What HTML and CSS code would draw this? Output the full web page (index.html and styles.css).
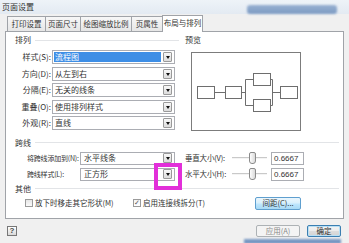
FILE: index.html
```html
<!DOCTYPE html>
<html lang="zh">
<head>
<meta charset="utf-8">
<title>页面设置</title>
<link rel="stylesheet" href="styles.css">
</head>
<body>
<div class="dialog">
  <div class="titlebar">
    <span class="title">页面设置</span>
    <div class="glow"></div>
  </div>
  <div class="tabs">
    <div class="tab w1">打印设置</div>
    <div class="tab w2">页面尺寸</div>
    <div class="tab w3">绘图缩放比例</div>
    <div class="tab w4">页属性</div>
    <div class="tab w5 active">布局与排列</div>
  </div>
  <div class="panel">
    <div class="top">
      <div class="arr">
        <div class="gtitle"><span>排列</span><i class="rule"></i></div>
        <div class="rows">
          <div class="row"><label class="lbl">样式(S):</label><div class="combo"><span class="val sel">流程图</span><span class="drop"></span></div></div>
          <div class="row"><label class="lbl">方向(D):</label><div class="combo"><span class="val">从左到右</span><span class="drop"></span></div></div>
          <div class="row"><label class="lbl">分隔(E):</label><div class="combo"><span class="val">无关的线条</span><span class="drop"></span></div></div>
          <div class="row"><label class="lbl">重叠(O):</label><div class="combo"><span class="val">使用排列样式</span><span class="drop"></span></div></div>
          <div class="row"><label class="lbl">外观(R):</label><div class="combo"><span class="val">直线</span><span class="drop"></span></div></div>
        </div>
      </div>
      <div class="pv">
        <div class="gtitle"><span>预览</span></div>
        <div class="pvbox">
          <svg width="108" height="77" viewBox="0 0 108 77">
            <g fill="#fff" stroke="#6e6e6e" stroke-width="1">
              <path d="M23 39.5H33M50 39.5H53.5M53.5 26.5V52.5M53.5 26.5H61M53.5 52.5H61M78 26.5H80.5M78 52.5H80.5M80.5 26.5V52.5M80.5 39.5H88" fill="none"/>
              <rect x="5.5" y="33.5" width="17" height="12"/>
              <rect x="33.5" y="33.5" width="16" height="12"/>
              <rect x="61.5" y="20.5" width="17" height="12"/>
              <rect x="61.5" y="46.5" width="17" height="12"/>
              <rect x="88.5" y="33.5" width="17" height="12"/>
            </g>
          </svg>
        </div>
      </div>
    </div>
    <div class="kx">
      <div class="gtitle"><span>跨线</span><i class="rule"></i></div>
      <div class="kxrow">
        <div class="kxleft"><label class="lbl2">将跨线添加到(N):</label><div class="combo c2"><span class="val">水平线条</span><span class="drop"></span></div></div>
        <div class="kxright"><label class="lbl3">垂直大小(V):</label><div class="slider"><i class="track"></i><i class="thumb"></i></div><div class="num">0.6667</div></div>
      </div>
      <div class="kxrow">
        <div class="kxleft"><label class="lbl2">跨线样式(L):</label><div class="combo c2"><span class="val">正方形</span><span class="drop"></span></div></div>
        <div class="kxright"><label class="lbl3">水平大小(H):</label><div class="slider"><i class="track"></i><i class="thumb"></i></div><div class="num">0.6667</div></div>
      </div>
    </div>
    <div class="other">
      <div class="gtitle short"><span>其他</span><i class="rule"></i></div>
      <div class="orow">
        <span class="chk"></span><span class="ctext t1">放下时移走其它形状(M)</span>
        <span class="chk on">✓</span><span class="ctext">启用连接线拆分(T)</span>
        <button class="btn spacing">间距(C)...</button>
      </div>
    </div>
  </div>
  <div class="footer">
    <div class="help"><span>?</span></div>
    <button class="btn apply">应用(A)</button>
    <button class="btn ok">确定</button>
  </div>
  <div class="bottomglow"></div>
  <div class="mark"></div>
</div>
</body>
</html>
```
FILE: styles.css
```css
* { box-sizing: border-box; }
html, body { margin: 0; padding: 0; }
body {
  width: 349px;
  height: 243px;
  overflow: hidden;
  background: #f0f0f0;
  font-family: "Noto Sans CJK SC", "Noto Sans", sans-serif;
  font-size: 8px;
  color: #333;
}
.dialog { position: relative; width: 349px; height: 243px; background: #f0f0f0; }
.titlebar {
  height: 14px;
  display: flex;
  align-items: center;
  padding-left: 2px;
  background: linear-gradient(#eef3f8, #e3eaf2);
}
.title { font-size: 8px; color: #333; line-height: 10px; }
.glow {
  margin-left: auto;
  margin-right: 12px;
  align-self: flex-end;
  width: 90px;
  height: 9px;
  background: linear-gradient(#7d9cc6, #5a80b3);
  border-radius: 3px;
  filter: blur(1.2px);
  opacity: 0.75;
}
.tabs {
  height: 17px;
  display: flex;
  align-items: flex-end;
  padding-left: 7px;
  position: relative;
  z-index: 2;
}
.tab {
  height: 15px;
  border: 1px solid #a0a3a8;
  border-bottom: none;
  margin-right: -1px;
  background: linear-gradient(#f7f7f7, #e6e6e6);
  display: flex;
  align-items: center;
  justify-content: center;
  font-size: 7.5px;
  color: #333;
  line-height: 10px;
  white-space: nowrap;
}
.w1 { width: 39px; }
.w2 { width: 36px; }
.w3 { width: 52px; }
.w4 { width: 32px; }
.w5 { width: 41px; }
.tab.active {
  height: 17px;
  margin-bottom: -1px;
  background: #fff;
  padding-bottom: 2px;
}
.panel {
  margin: 0 5px;
  height: 188px;
  border: 1px solid #a0a3a8;
  background: #fff;
  position: relative;
  z-index: 1;
}
.gtitle {
  height: 16px;
  display: flex;
  align-items: center;
  color: #333;
  line-height: 10px;
}
.gtitle .rule {
  flex: 1;
  height: 1px;
  background: #e2e4e7;
  margin-left: 4px;
}
.top { display: flex; height: 101px; }
.arr { width: 173px; padding-left: 9px; }
.rows { margin-top: 1px; }
.row { height: 16.5px; display: flex; align-items: center; }
.lbl { width: 37px; text-align: right; padding-right: 1px; line-height: 10px; white-space: nowrap; }
.combo {
  width: 123px;
  height: 14px;
  border: 1px solid #abadb3;
  background: #fff;
  display: flex;
  align-items: center;
  padding: 1px;
}
.val { flex: 1; height: 10px; line-height: 10px; padding-left: 1px; white-space: nowrap; }
.val.sel { background: #3d8ee6; color: #fff; margin-right: 2px; }
.drop {
  width: 9px;
  height: 10px;
  border: 1px solid #9a9a9a;
  border-radius: 1px;
  background: linear-gradient(#f8f8f8, #dcdcdc);
  margin-right: 1px;
  position: relative;
}
.drop::after {
  content: "";
  position: absolute;
  left: 1.5px;
  top: 3px;
  border-left: 2.5px solid transparent;
  border-right: 2.5px solid transparent;
  border-top: 3px solid #111;
}
.pv { padding-left: 6px; }
.pvbox {
  margin-left: 6px;
  margin-top: 4px;
  width: 110px;
  height: 79px;
  border: 1px solid #7c7c7c;
  background: #fff;
}
.pvbox svg { display: block; }
.kx { padding: 2px 4px 0 9px; height: 49px; }
.kx .gtitle { height: 15px; }
.kxrow { height: 16px; display: flex; align-items: center; }
.kxleft { width: 164px; display: flex; align-items: center; padding-left: 12px; }
.lbl2 { width: 53px; line-height: 10px; white-space: nowrap; font-size: 7px; letter-spacing: -0.2px; }
.combo.c2 { width: 95px; height: 13px; }
.combo.c2 .val { padding-left: 2px; }
.kxright { margin-left: 6px; display: flex; align-items: center; }
.lbl3 { width: 45px; line-height: 10px; white-space: nowrap; font-size: 7.5px; letter-spacing: -0.2px; }
.slider { width: 41px; height: 12px; position: relative; }
.track {
  position: absolute;
  left: 2px;
  right: 4px;
  top: 5px;
  height: 2px;
  background: #c9c9c9;
  border-bottom: 1px solid #f4f4f4;
}
.thumb {
  position: absolute;
  left: 19px;
  top: 0;
  width: 7px;
  height: 12px;
  border: 1px solid #8a8a8a;
  border-radius: 2px 2px 3px 3px;
  background: linear-gradient(90deg, #fdfdfd, #dadada);
}
.num {
  width: 33px;
  height: 13px;
  border: 1px solid #abadb3;
  font-family: "Liberation Sans", Arial, sans-serif;
  font-size: 8px;
  line-height: 11px;
  padding-left: 2px;
  color: #333;
}
.other { padding: 0 4px 0 9px; }
.other .gtitle { height: 13px; }
.orow { height: 16px; display: flex; align-items: center; padding-left: 10px; }
.chk {
  width: 8px;
  height: 8px;
  border: 1px solid #9a9a9a;
  background: linear-gradient(#e6e6e6, #fafafa);
  font-size: 7px;
  line-height: 6px;
  text-align: center;
  color: #555;
  font-family: "DejaVu Sans", sans-serif;
}
.chk.on { background: linear-gradient(#f4f4f4, #fff); }
.ctext { margin-left: 2px; line-height: 10px; white-space: nowrap; font-size: 7.5px; }
.t1 { width: 98px; }
.btn {
  font-family: "Noto Sans CJK SC", sans-serif;
  font-size: 7.5px;
  line-height: 10px;
  padding: 0;
  border: 1px solid #8e8f8f;
  border-radius: 2px;
  background: linear-gradient(#f4f4f4 0%, #ececec 45%, #dcdcdc 55%, #d3d3d3 100%);
  color: #333;
  display: flex;
  align-items: center;
  justify-content: center;
  white-space: nowrap;
}
.spacing {
  margin-left: auto;
  margin-right: 38px;
  width: 46px;
  height: 13px;
  border-color: #5f9fcf;
  background: linear-gradient(#eaf6fd 0%, #d9f0fc 45%, #bee6fd 55%, #a7d9f5 100%);
}
.footer {
  height: 20px;
  display: flex;
  align-items: center;
  padding-left: 7px;
  padding-top: 3px;
}
.help {
  width: 10px;
  height: 10px;
  border: 1px solid #777;
  background: linear-gradient(#fff, #d8d8d8);
  display: flex;
  align-items: center;
  justify-content: center;
}
.help span {
  font-family: "Liberation Sans", sans-serif;
  font-size: 8px;
  font-weight: bold;
  line-height: 8px;
  color: #444;
}
.apply {
  margin-left: auto;
  width: 44px;
  height: 12px;
  color: #8a8a8a;
  border-color: #adb2b5;
  background: #f4f4f4;
}
.ok {
  margin-left: 7px;
  margin-right: 8px;
  width: 34px;
  height: 12px;
  border-color: #3c7fb1;
  box-shadow: inset 0 0 0 1px #b8e0f6;
}
.bottomglow {
  position: absolute;
  left: 244px;
  top: 239px;
  width: 97px;
  height: 5px;
  background: #5b82b8;
  filter: blur(1px);
  opacity: 0.8;
}
.mark {
  position: absolute;
  left: 154px;
  top: 163px;
  width: 28px;
  height: 27px;
  border: 4px solid #e22fd9;
  z-index: 5;
}
```
